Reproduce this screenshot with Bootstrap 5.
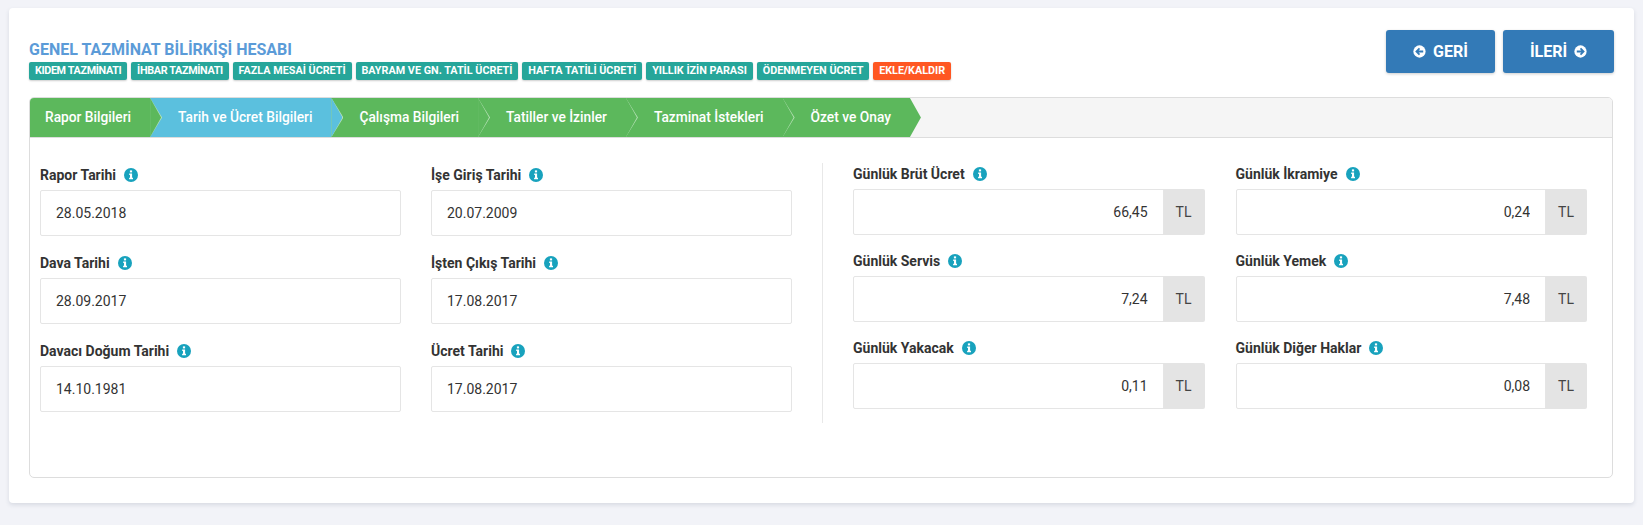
<!DOCTYPE html>
<html lang="tr">
<head>
    <meta charset="utf-8">
    <title>Genel Tazminat Bilirkişi Hesabı</title>
    <link href="https://cdn.jsdelivr.net/npm/bootstrap@5.3.0/dist/css/bootstrap.min.css" rel="stylesheet">
    <style>
        body { background: #f2f3f8; font-family: Roboto, "Liberation Sans", sans-serif; color: #333; font-size: 14px; }
        .calc-panel { margin: 8px 9px 22px 9px; height: 495px; padding: 22px 21px 25px 20px; background: #fff; border-radius: 4px; box-shadow: 0 2px 4px rgba(60, 70, 100, .14); }
        .calc-head { height: 43px; margin-bottom: 24px; }
        .calc-title { margin: 11px 0 0; font-size: 16px; line-height: 18px; font-weight: 700; color: #5b9bd8; }
        .tag-row { margin: 3px 0 0; gap: 4px; }
        .tag-item { padding: 0 5.9px; height: 18px; line-height: 18px; font-size: 10.8px; font-weight: 700; border-radius: 2px; color: #fff; background: #26a69a; box-shadow: 0 1px 2px rgba(0, 0, 0, .2); white-space: nowrap; }
        .tag-item:nth-child(-n+2) { letter-spacing: -.35px; }
        .tag-item.tag-edit { background: #ff5722; }
        .nav-group { margin-right: -1px; }
        .nav-btn { height: 43px; border-radius: 3px; background: #337ab7; border: 0; font-weight: 700; font-size: 16px; box-shadow: 0 1px 3px rgba(0, 0, 0, .2); }
        .nav-btn:hover { background: #2e6da4; }
        .nav-back { width: 109px; }
        .nav-next { width: 111px; }
        .wizard-box { border: 1px solid #ddd; border-radius: 5px; height: 381px; }
        .wizard-steps { height: 40px; background: #f5f5f5; border-bottom: 1px solid #ddd; border-radius: 4px 4px 0 0; }
        .step-item { position: relative; padding: 0 19px 0 28px; line-height: 39px; font-size: 13.75px; color: #fff; font-weight: 500; background: #5cb85c; }
        .step-item:first-child { padding-left: 15px; border-top-left-radius: 4px; }
        .step-item::before, .step-item::after { content: ""; position: absolute; top: 0; height: 100%; clip-path: polygon(0 0, 100% 50%, 0 100%); }
        .step-item::before { right: -12px; width: 12px; background: #b9e2b9; z-index: 1; }
        .step-item::after { right: -11px; width: 11px; background: #5cb85c; z-index: 2; }
        .step-item.step-active { background: #5bc0de; }
        .step-item.step-active::after { background: #5bc0de; }
        .step-item:last-child::before { display: none; }
        .wizard-body { padding-left: 10px; }
        .dates-col { width: 782px; padding: 27px 30px 0 0; }
        .money-col { flex: 1; padding: 26px 25px 0 0; }
        .field-grid { display: grid; grid-template-columns: 1fr 1fr; column-gap: 30px; }
        .money-grid { column-gap: 31px; }
        .divider-wrap { border-left: 1px solid #e8e8e8; height: 260px; margin-top: 25px; padding-left: 30px; }
        .field-label { display: flex; align-items: center; gap: 8px; height: 20px; margin-bottom: 5px; font-weight: 700; color: #333; }
        .field-block { margin-bottom: 17px; }
        .money-grid .field-block { margin-bottom: 16px; }
        .field-input { height: 46px; padding: 0 15px; border: 1px solid #e5e5e5; border-radius: 2px; font-size: 14px; color: #333; }
        .money-unit { width: 42px; padding: 0; justify-content: center; background: #e4e4e4; border: 0; border-radius: 2px; font-size: 14px; color: #444; }
        .info-ico { width: 14px; height: 14px; flex: none; }
        .btn-ico { width: 13px; height: 13px; vertical-align: -1px; }
        .nav-back .btn-ico { margin-right: 3px; }
        .nav-next .btn-ico { margin-left: 3px; }
    </style>
</head>
<body>
    <svg class="d-none">
        <symbol id="ico-info" viewBox="0 0 14 14">
            <circle cx="7" cy="7" r="7" fill="#18a2bd"/>
            <rect x="5.9" y="2.4" width="2.2" height="2" fill="#fff"/>
            <path d="M5.2 5.6h2.9v4.1h.9v1.5H5.1V9.7h.9V7.1h-.8z" fill="#fff"/>
        </symbol>
        <symbol id="ico-left" viewBox="0 0 14 14">
            <circle cx="7" cy="7" r="6.6" fill="#fff"/>
            <path d="M11 7H4M7 3.7 3.7 7 7 10.3" fill="none" stroke="#337ab7" stroke-width="1.9"/>
        </symbol>
        <symbol id="ico-right" viewBox="0 0 14 14">
            <circle cx="7" cy="7" r="6.6" fill="#fff"/>
            <path d="M3 7h7M7 3.7 10.3 7 7 10.3" fill="none" stroke="#337ab7" stroke-width="1.9"/>
        </symbol>
    </svg>

    <div class="calc-panel">
        <div class="calc-head d-flex justify-content-between">
            <div>
                <h1 class="calc-title">GENEL TAZMİNAT BİLİRKİŞİ HESABI</h1>
                <div class="tag-row d-flex">
                    <span class="tag-item">KIDEM TAZMİNATI</span>
                    <span class="tag-item">İHBAR TAZMİNATI</span>
                    <span class="tag-item">FAZLA MESAİ ÜCRETİ</span>
                    <span class="tag-item">BAYRAM VE GN. TATİL ÜCRETİ</span>
                    <span class="tag-item">HAFTA TATİLİ ÜCRETİ</span>
                    <span class="tag-item">YILLIK İZİN PARASI</span>
                    <span class="tag-item">ÖDENMEYEN ÜCRET</span>
                    <span class="tag-item tag-edit">EKLE/KALDIR</span>
                </div>
            </div>
            <div class="nav-group d-flex gap-2">
                <button class="btn btn-primary nav-btn nav-back"><svg class="btn-ico"><use href="#ico-left"/></svg> GERİ</button>
                <button class="btn btn-primary nav-btn nav-next">İLERİ <svg class="btn-ico"><use href="#ico-right"/></svg></button>
            </div>
        </div>

        <div class="wizard-box">
            <div class="wizard-steps d-flex">
                <div class="step-item">Rapor Bilgileri</div>
                <div class="step-item step-active">Tarih ve Ücret Bilgileri</div>
                <div class="step-item">Çalışma Bilgileri</div>
                <div class="step-item">Tatiller ve İzinler</div>
                <div class="step-item">Tazminat İstekleri</div>
                <div class="step-item">Özet ve Onay</div>
            </div>
            <div class="wizard-body d-flex">
                <div class="dates-col">
                    <div class="field-grid">
                        <div class="field-block">
                            <label class="field-label">Rapor Tarihi <svg class="info-ico"><use href="#ico-info"/></svg></label>
                            <input class="form-control field-input" value="28.05.2018">
                        </div>
                        <div class="field-block">
                            <label class="field-label">İşe Giriş Tarihi <svg class="info-ico"><use href="#ico-info"/></svg></label>
                            <input class="form-control field-input" value="20.07.2009">
                        </div>
                        <div class="field-block">
                            <label class="field-label">Dava Tarihi <svg class="info-ico"><use href="#ico-info"/></svg></label>
                            <input class="form-control field-input" value="28.09.2017">
                        </div>
                        <div class="field-block">
                            <label class="field-label">İşten Çıkış Tarihi <svg class="info-ico"><use href="#ico-info"/></svg></label>
                            <input class="form-control field-input" value="17.08.2017">
                        </div>
                        <div class="field-block">
                            <label class="field-label">Davacı Doğum Tarihi <svg class="info-ico"><use href="#ico-info"/></svg></label>
                            <input class="form-control field-input" value="14.10.1981">
                        </div>
                        <div class="field-block">
                            <label class="field-label">Ücret Tarihi <svg class="info-ico"><use href="#ico-info"/></svg></label>
                            <input class="form-control field-input" value="17.08.2017">
                        </div>
                    </div>
                </div>
                <div class="divider-wrap"></div>
                <div class="money-col">
                    <div class="field-grid money-grid">
                        <div class="field-block">
                            <label class="field-label">Günlük Brüt Ücret <svg class="info-ico"><use href="#ico-info"/></svg></label>
                            <div class="input-group">
                                <input class="form-control field-input text-end" value="66,45">
                                <span class="input-group-text money-unit">TL</span>
                            </div>
                        </div>
                        <div class="field-block">
                            <label class="field-label">Günlük İkramiye <svg class="info-ico"><use href="#ico-info"/></svg></label>
                            <div class="input-group">
                                <input class="form-control field-input text-end" value="0,24">
                                <span class="input-group-text money-unit">TL</span>
                            </div>
                        </div>
                        <div class="field-block">
                            <label class="field-label">Günlük Servis <svg class="info-ico"><use href="#ico-info"/></svg></label>
                            <div class="input-group">
                                <input class="form-control field-input text-end" value="7,24">
                                <span class="input-group-text money-unit">TL</span>
                            </div>
                        </div>
                        <div class="field-block">
                            <label class="field-label">Günlük Yemek <svg class="info-ico"><use href="#ico-info"/></svg></label>
                            <div class="input-group">
                                <input class="form-control field-input text-end" value="7,48">
                                <span class="input-group-text money-unit">TL</span>
                            </div>
                        </div>
                        <div class="field-block">
                            <label class="field-label">Günlük Yakacak <svg class="info-ico"><use href="#ico-info"/></svg></label>
                            <div class="input-group">
                                <input class="form-control field-input text-end" value="0,11">
                                <span class="input-group-text money-unit">TL</span>
                            </div>
                        </div>
                        <div class="field-block">
                            <label class="field-label">Günlük Diğer Haklar <svg class="info-ico"><use href="#ico-info"/></svg></label>
                            <div class="input-group">
                                <input class="form-control field-input text-end" value="0,08">
                                <span class="input-group-text money-unit">TL</span>
                            </div>
                        </div>
                    </div>
                </div>
            </div>
        </div>
    </div>

    <script src="https://cdn.jsdelivr.net/npm/bootstrap@5.3.0/dist/js/bootstrap.bundle.min.js"></script>
</body>
</html>
